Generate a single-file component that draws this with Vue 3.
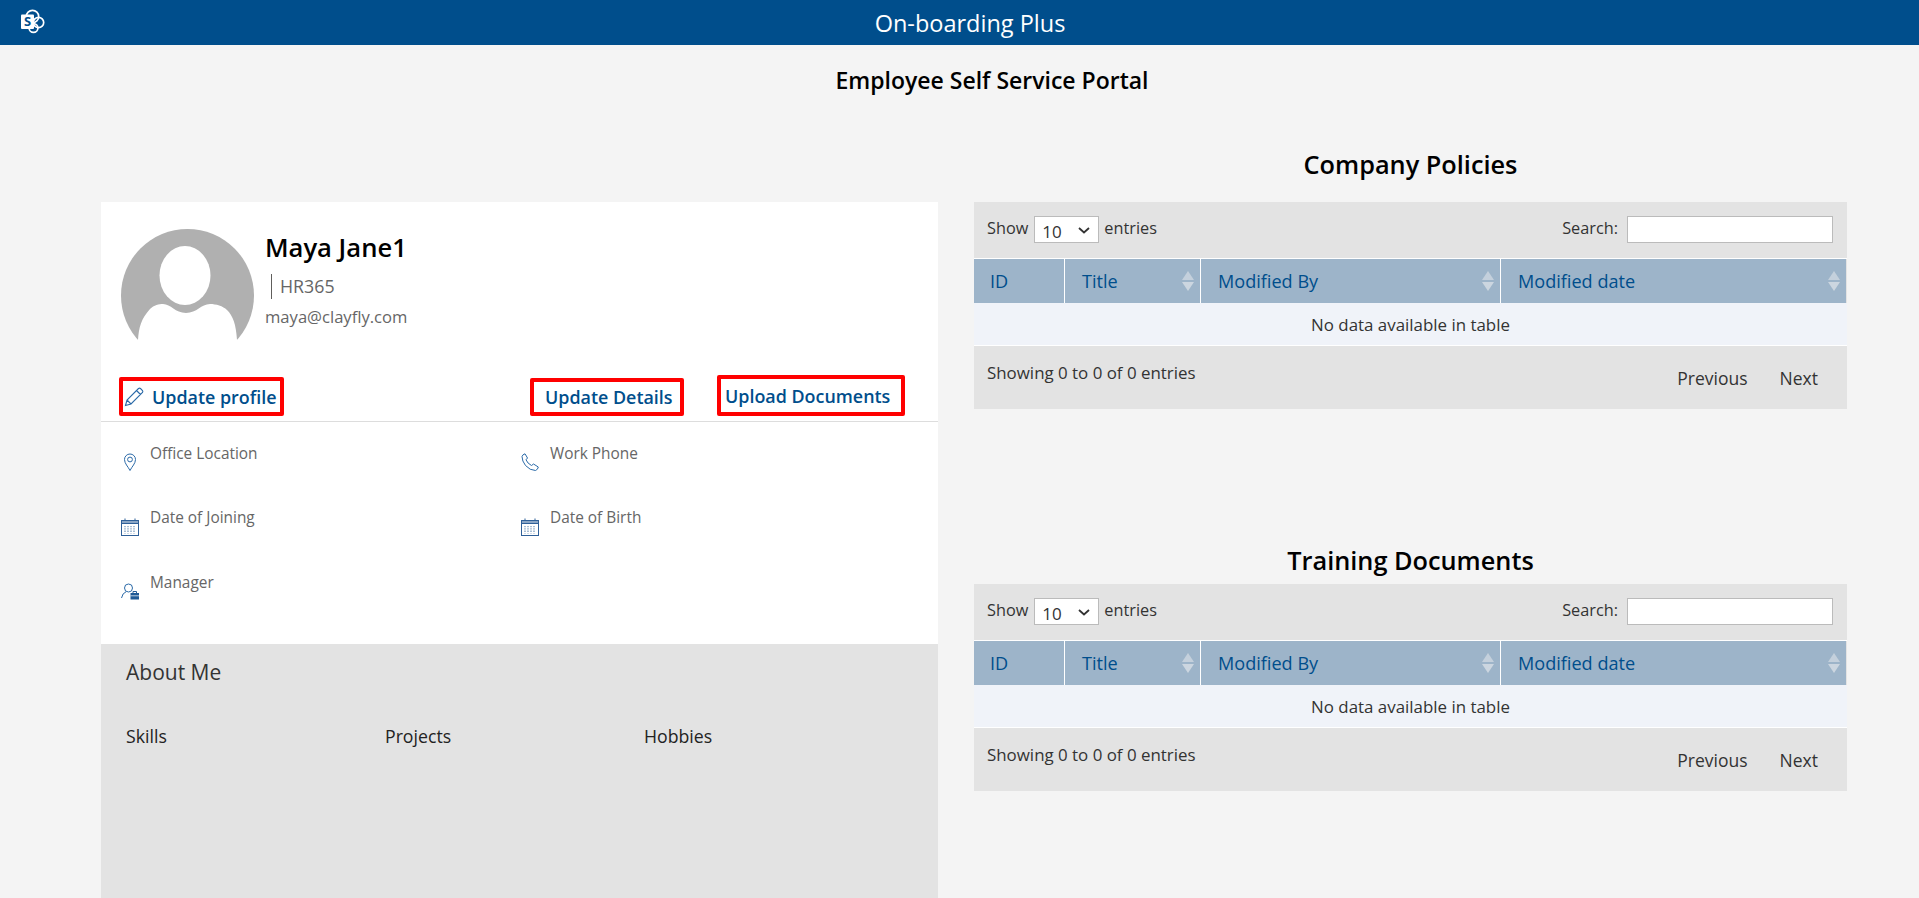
<script setup>
const columns = [
  { label: 'ID', width: 91, sort: false },
  { label: 'Title', width: 136, sort: true },
  { label: 'Modified By', width: 300, sort: true },
  { label: 'Modified date', width: 345, sort: true }
]

const sections = [
  { title: 'Company Policies', tight: false },
  { title: 'Training Documents', tight: true }
]

const details = [
  { label: 'Office Location', icon: 'pin' },
  { label: 'Work Phone', icon: 'phone' },
  { label: 'Date of Joining', icon: 'calendar' },
  { label: 'Date of Birth', icon: 'calendar' },
  { label: 'Manager', icon: 'manager' }
]

const aboutItems = ['Skills', 'Projects', 'Hobbies']
</script>

<template>
  <div class="page">
    <header class="topbar">
      <svg class="logo" viewBox="0 0 26 26" width="26" height="26">
        <circle cx="12.5" cy="7.5" r="6.2" fill="none" stroke="#fff" stroke-width="1.7" />
        <circle cx="18.5" cy="13.5" r="5.2" fill="none" stroke="#fff" stroke-width="1.7" />
        <circle cx="13.5" cy="19" r="4.4" fill="none" stroke="#fff" stroke-width="1.7" />
        <rect x="1" y="5.5" width="13" height="14.5" rx="1" fill="#fff" />
        <text x="7.5" y="17" text-anchor="middle" class="logo-s">S</text>
      </svg>
      <span class="topbar-title">On-boarding Plus</span>
    </header>

    <h1 class="portal-title">Employee Self Service Portal</h1>

    <div class="columns">
      <div class="left">
        <div class="card">
          <div class="profile">
            <svg class="avatar" viewBox="0 0 133 133" width="133" height="133">
              <circle cx="66.5" cy="66.5" r="66.5" fill="#b0b0b0" />
              <ellipse cx="64" cy="46.5" rx="25.5" ry="29.5" fill="#fff" />
              <path d="M17 111 C18 98 20 90 29 80 C33 76 38 75 42 75 C50 75 54 84 65 84 C76 84 80 75 89 75 C95 75 102 77 106 81 C112 87 115 95 116 111 Z" fill="#fff" />
              <rect x="0" y="111" width="133" height="22" fill="#fff" />
            </svg>
            <div class="who">
              <div class="name">Maya Jane1</div>
              <div class="dept">HR365</div>
              <div class="email">maya@clayfly.com</div>
            </div>
          </div>

          <div class="actions">
            <a class="action first">
              <svg viewBox="0 0 20 20" width="20" height="20" class="pencil">
                <path d="M1.5 18.5 L3 13 L14.5 1.5 Q15.5 .8 16.5 1.5 L18.5 3.5 Q19.2 4.5 18.5 5.5 L7 17 Z M3 13 L7 17 M12.5 3.5 L16.5 7.5" fill="none" stroke="#2b6aa8" stroke-width="1.1" />
              </svg>
              Update profile
            </a>
            <a class="action second">Update Details</a>
            <a class="action third">Upload Documents</a>
          </div>

          <div class="details">
            <div class="detail" v-for="item in details" :key="item.label">
              <svg viewBox="0 0 18 18" width="18" height="18" class="detail-icon">
                <template v-if="item.icon === 'pin'">
                  <path d="M9 17.5 C7 13.5 3.5 10.5 3.5 6.5 A5.5 5.5 0 0 1 14.5 6.5 C14.5 10.5 11 13.5 9 17.5 Z" fill="none" stroke="#2b6aa8" stroke-width="1" />
                  <circle cx="9" cy="6.5" r="2.4" fill="none" stroke="#2b6aa8" stroke-width="1" />
                </template>
                <template v-else-if="item.icon === 'phone'">
                  <path d="M1 3.5 Q1.5 1.5 4 .8 L6.5 5 L5 6.8 Q6.5 10.5 10.5 12.5 L12.5 11 L17.3 14 Q17 16.5 14.5 17.5 Q9 17.5 4.5 12.5 Q1 8 1 3.5 Z" fill="none" stroke="#2b6aa8" stroke-width="1" />
                </template>
                <template v-else-if="item.icon === 'calendar'">
                  <rect x=".5" y="2.5" width="17" height="15" fill="#fff" stroke="#2f6099" stroke-width="1" />
                  <rect x=".5" y="2.5" width="17" height="3" fill="#8aa6c6" stroke="#2f6099" stroke-width="1" />
                  <path d="M4 .5 V3 M14 .5 V3" stroke="#2f6099" stroke-width="1" />
                  <path d="M4 8 V15.5 M7 8 V15.5 M10 8 V15.5 M13 8 V15.5" stroke="#6f93ba" stroke-width="1.2" stroke-dasharray="1.3 1" />
                </template>
                <template v-else>
                  <circle cx="7.5" cy="6" r="4" fill="none" stroke="#2b6aa8" stroke-width="1" />
                  <path d="M.5 16 Q1.5 11 5 9.8" fill="none" stroke="#2b6aa8" stroke-width="1" />
                  <rect x="9.5" y="11" width="8.5" height="6.5" fill="#1f5a96" />
                  <path d="M12 11 V9.5 H15.5 V11" fill="none" stroke="#1f5a96" stroke-width="1" />
                  <path d="M9.5 13.8 H18" stroke="#fff" stroke-width=".7" />
                </template>
              </svg>
              <span class="detail-label">{{ item.label }}</span>
            </div>
          </div>
        </div>

        <div class="about">
          <div class="about-title">About Me</div>
          <div class="about-row">
            <div class="about-item" v-for="item in aboutItems" :key="item">{{ item }}</div>
          </div>
        </div>
      </div>

      <div class="right">
        <section v-for="section in sections" :key="section.title" class="section" :class="{ tight: section.tight }">
          <h2>{{ section.title }}</h2>
          <div class="panel">
            <div class="toolbar">
              <label class="length">
                Show
                <span class="select-wrap">
                  <select>
                    <option>10</option>
                    <option>25</option>
                  </select>
                  <svg class="chevron" viewBox="0 0 12 7" width="12" height="7">
                    <path d="M1 1 L6 5.5 L11 1" fill="none" stroke="#333" stroke-width="1.8" />
                  </svg>
                </span>
                entries
              </label>
              <label class="search">
                Search:
                <input type="text" />
              </label>
            </div>
            <div class="thead">
              <div class="th" v-for="col in columns" :key="col.label" :style="{ width: col.width + 'px' }">
                {{ col.label }}
                <span class="sort" v-if="col.sort"></span>
              </div>
            </div>
            <div class="tbody">No data available in table</div>
            <div class="tfoot">
              <span class="info">Showing 0 to 0 of 0 entries</span>
              <span class="paging">
                <a>Previous</a>
                <a>Next</a>
              </span>
            </div>
          </div>
        </section>
      </div>
    </div>
  </div>
</template>

<style>
html, body {
  margin: 0;
  background: #f4f4f4;
  overflow: hidden;
}
</style>

<style scoped>
.page {
  height: 898px;
  background: #f4f4f4;
  font-family: "Open Sans", "Noto Sans", sans-serif;
  color: #333;
  overflow: hidden;
}

.topbar {
  height: 45px;
  background: #004e8c;
  display: flex;
  align-items: center;
  justify-content: center;
  position: relative;
  padding-left: 21px;
}
.logo {
  position: absolute;
  left: 20px;
  top: 9px;
}
.logo-s {
  font-family: "Open Sans", sans-serif;
  font-size: 13px;
  font-weight: 700;
  fill: #004e8c;
}
.topbar-title {
  color: #fff;
  font-size: 23.5px;
}

.portal-title {
  margin: 0;
  height: 96px;
  line-height: 70px;
  padding-left: 65px;
  text-align: center;
  font-size: 23px;
  font-weight: 600;
  color: #000;
}

.columns {
  display: flex;
  padding-left: 101px;
  gap: 36px;
}

.left {
  width: 837px;
  margin-top: 61px;
}
.card {
  background: #fff;
  height: 442px;
}
.profile {
  display: flex;
  padding: 27px 0 0 20px;
  height: 146px;
  box-sizing: border-box;
  gap: 11px;
}
.avatar {
  flex: none;
}
.who {
  padding-top: 1px;
}
.name {
  font-size: 25.6px;
  font-weight: 600;
  color: #000;
  line-height: 36px;
}
.dept {
  margin: 8px 0 0 6px;
  padding-left: 8px;
  border-left: 1px solid #605e5c;
  font-size: 17.8px;
  line-height: 25px;
  color: #666;
}
.email {
  margin-top: 6px;
  font-size: 16.6px;
  line-height: 24px;
  color: #666;
}

.actions {
  display: flex;
  align-items: flex-end;
  height: 74px;
  padding-bottom: 5px;
  border-bottom: 1px solid #ddd;
  box-sizing: border-box;
  color: #004e8c;
  font-size: 17.9px;
  font-weight: 600;
}
.action {
  display: flex;
  align-items: center;
  box-sizing: border-box;
  border: 4.5px solid #f00;
  border-radius: 2px;
  white-space: nowrap;
}
.first {
  margin-left: 18px;
  width: 165px;
  height: 39px;
  padding-left: 1px;
  gap: 8px;
}
.pencil {
  flex: none;
}
.second {
  margin-left: 246px;
  width: 154px;
  height: 38px;
  padding-left: 11px;
}
.third {
  margin-left: 33px;
  width: 188px;
  height: 41px;
  padding-left: 4px;
}

.details {
  display: grid;
  grid-template-columns: 400px 400px;
  grid-auto-rows: 64.5px;
  padding: 20.5px 0 0 20px;
}
.detail {
  display: flex;
  gap: 11px;
}
.detail-icon {
  flex: none;
  margin-top: 10.5px;
}
.detail-label {
  font-size: 15.4px;
  line-height: 22px;
  color: #666;
}

.about {
  background: #e3e3e3;
  height: 254px;
  padding: 14px 25px;
  box-sizing: border-box;
}
.about-title {
  font-size: 21px;
  line-height: 28px;
  color: #333;
}
.about-row {
  display: flex;
  margin-top: 37px;
}
.about-item {
  width: 259px;
  font-size: 17.7px;
  line-height: 26px;
  color: #222;
}

.right {
  width: 873px;
}
.section h2 {
  margin: 0 0 14px;
  height: 47px;
  line-height: 47px;
  text-align: center;
  font-size: 25.3px;
  font-weight: 600;
  color: #000;
}
.section.tight {
  margin-top: 127px;
}
.section.tight h2 {
  height: 48px;
  line-height: 48px;
  margin-bottom: 0;
}

.panel {
  background: #e3e3e3;
  font-size: 16.9px;
  color: #333;
}
.toolbar {
  height: 56px;
  display: flex;
  justify-content: space-between;
  padding: 14px 14px 0 13px;
  box-sizing: border-box;
  font-size: 16.3px;
}
.length,
.search {
  display: flex;
  align-items: flex-start;
  line-height: 24px;
}
.select-wrap {
  position: relative;
  display: block;
  width: 65px;
  height: 27px;
  margin: 0 5px 0 6px;
}
.select-wrap select {
  appearance: none;
  display: block;
  width: 65px;
  height: 27px;
  padding: 3px 0 0 7px;
  box-sizing: border-box;
  border: 1px solid #bbb;
  border-radius: 0;
  background: #fff;
  font: inherit;
  font-size: 17px;
  color: #333;
}
.chevron {
  position: absolute;
  right: 9px;
  top: 11px;
  pointer-events: none;
}
.search input {
  display: block;
  width: 206px;
  height: 27px;
  margin-left: 9px;
  box-sizing: border-box;
  border: 1px solid #bbb;
  background: #fff;
}

.thead {
  display: flex;
  height: 45px;
  border-top: 1px solid #fff;
  box-sizing: border-box;
}
.th {
  position: relative;
  box-sizing: border-box;
  background: #9db4c9;
  border-right: 1px solid #fff;
  padding-left: 17px;
  line-height: 44px;
  font-size: 18.1px;
  color: #004e8c;
}
.th:first-child {
  padding-left: 16px;
}
.th:last-child {
  border-right: 0;
}
.sort {
  position: absolute;
  right: 6px;
  top: 12px;
  width: 0;
  height: 0;
  border-left: 6px solid transparent;
  border-right: 6px solid transparent;
  border-bottom: 9px solid #c4d0dc;
}
.sort::after {
  content: "";
  position: absolute;
  left: -6px;
  top: 11px;
  width: 0;
  height: 0;
  border-left: 6px solid transparent;
  border-right: 6px solid transparent;
  border-top: 9px solid #ccd6e0;
}

.tbody {
  height: 43px;
  line-height: 43px;
  background: #f0f3f9;
  border-bottom: 1px solid #fff;
  box-sizing: border-box;
  text-align: center;
}
.tfoot {
  height: 63px;
  display: flex;
  justify-content: space-between;
  padding: 15px 29px 0 13px;
  box-sizing: border-box;
}
.info {
  line-height: 24px;
}
.paging {
  display: flex;
  gap: 32px;
  margin-top: 5px;
  font-size: 17.5px;
  line-height: 24px;
}
</style>
